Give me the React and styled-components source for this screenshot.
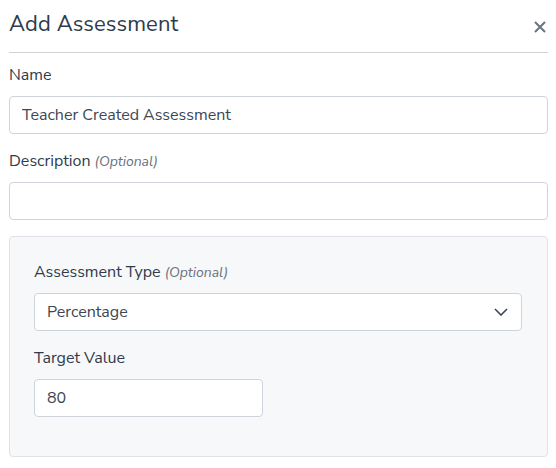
import styled, { createGlobalStyle } from "styled-components";

const GlobalStyle = createGlobalStyle`
  body {
    margin: 0;
    background: #ffffff;
    font-family: "Nunito Sans", Lato, "Open Sans", sans-serif;
    color: #2f3b4b;
  }
`;

const Modal = styled.div`
  width: 556px;
  height: 468px;
  padding: 0 8px 0 9px;
  box-sizing: border-box;
  background: #fff;
`;

const Header = styled.div`
  display: flex;
  align-items: center;
  justify-content: space-between;
  height: 53px;
  border-bottom: 1px solid #cfd2d6;
  box-sizing: border-box;
  padding-bottom: 4px;
`;

const Title = styled.h2`
  margin: 0;
  font-size: 22px;
  font-weight: 400;
  color: #2f3b4b;
  letter-spacing: 0.1px;
`;

const Close = styled.button`
  border: 0;
  background: none;
  padding: 0;
  margin-right: 2px;
  margin-top: 6px;
  display: flex;
  color: #6b7280;
  cursor: pointer;
`;

const Body = styled.div`
  display: flex;
  flex-direction: column;
  padding-top: 12px;
`;

const Field = styled.div`
  display: flex;
  flex-direction: column;
  gap: 10px;
  margin-bottom: ${(p) => p.$mb || 0}px;
`;

const Label = styled.label`
  font-size: 16px;
  line-height: 21px;
  color: #2f3b4b;
`;

const Optional = styled.em`
  font-size: 14px;
  color: #6b7280;
  font-style: italic;
`;

const Input = styled.input`
  height: 38px;
  width: ${(p) => p.$width || "100%"};
  box-sizing: border-box;
  border: 1px solid #cfd4db;
  border-radius: 4px;
  padding: 0 12px;
  font-family: inherit;
  font-size: 16px;
  color: #3d4652;
  background: #fff;
  outline: none;
`;

const SelectBox = styled.div`
  height: 38px;
  box-sizing: border-box;
  border: 1px solid #cfd4db;
  border-radius: 4px;
  padding: 0 13px 0 12px;
  display: flex;
  align-items: center;
  justify-content: space-between;
  font-size: 16px;
  color: #3d4652;
  background: #fff;
`;

const Panel = styled.div`
  margin-top: 16px;
  height: 221px;
  box-sizing: border-box;
  background: #f7f8fa;
  border: 1px solid #dfe2e6;
  border-radius: 4px;
  padding: 25px 25px 0 24px;
  display: flex;
  flex-direction: column;
`;

export default function App() {
  return (
    <>
      <GlobalStyle />
      <Modal>
        <Header>
          <Title>Add Assessment</Title>
          <Close aria-label="Close">
            <svg width="12" height="12" viewBox="0 0 12 12">
              <path d="M1 1L11 11M11 1L1 11" stroke="#6b7280" strokeWidth="2" />
            </svg>
          </Close>
        </Header>
        <Body>
          <Field $mb={17}>
            <Label>Name</Label>
            <Input defaultValue="Teacher Created Assessment" />
          </Field>
          <Field>
            <Label>
              Description <Optional>(Optional)</Optional>
            </Label>
            <Input />
          </Field>
          <Panel>
            <Field $mb={17}>
              <Label>
                Assessment Type <Optional>(Optional)</Optional>
              </Label>
              <SelectBox>
                <span>Percentage</span>
                <svg width="14" height="8" viewBox="0 0 14 8">
                  <path d="M1 1L7 7L13 1" fill="none" stroke="#3d4652" strokeWidth="1.6" />
                </svg>
              </SelectBox>
            </Field>
            <Field>
              <Label>Target Value</Label>
              <Input $width="229px" defaultValue="80" />
            </Field>
          </Panel>
        </Body>
      </Modal>
    </>
  );
}
